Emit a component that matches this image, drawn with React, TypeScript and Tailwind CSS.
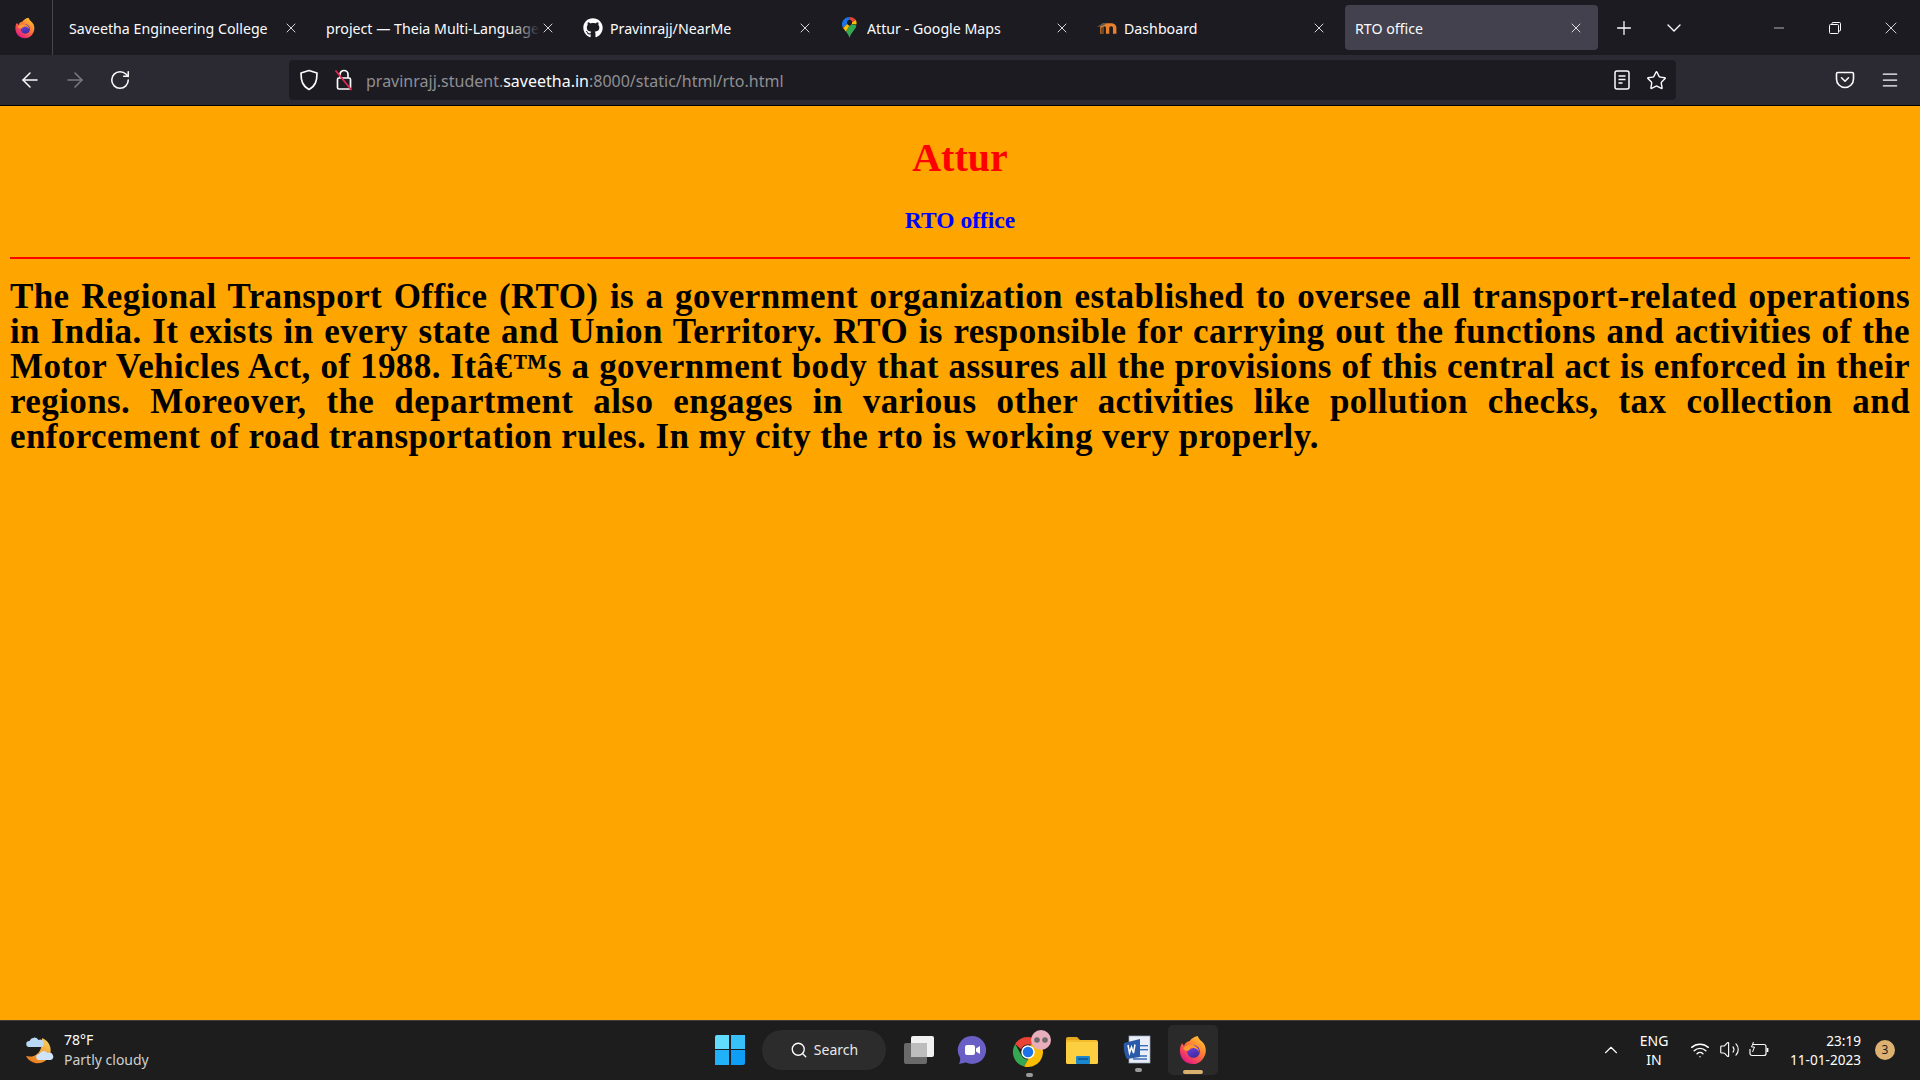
import React from "react";
import { ArrowLeft, ArrowRight, RotateCw, X, Plus, ChevronDown, ChevronUp, Minus, Star, Menu, Search, Wifi, Volume2 } from "lucide-react";
import { FaGithub } from "react-icons/fa";

const ui = "font-['Noto_Sans','Open_Sans',sans-serif]";

function FirefoxLogo({ size = 22 }: { size?: number }) {
  return (
    <svg width={size} height={size} viewBox="0 0 32 32">
      <defs>
        <linearGradient id="ffa" x1="0.8" y1="0.1" x2="0.2" y2="0.95">
          <stop offset="0" stopColor="#ffbd2e" />
          <stop offset="0.45" stopColor="#ff7139" />
          <stop offset="1" stopColor="#e31587" />
        </linearGradient>
        <linearGradient id="ffb" x1="0.3" y1="0" x2="0.7" y2="1">
          <stop offset="0" stopColor="#7542e5" />
          <stop offset="1" stopColor="#3a2a9c" />
        </linearGradient>
      </defs>
      <path d="M21 1c1 4 6 6 7.500 10 2 5 1.500 10-2 14.500C23.500 29.500 19.500 31 16 31 8 31 2 25 2 16.500 2 13 3 10.500 4.500 8.500c.5 1.500 1 2.300 2 3C7.500 8.500 10 7 12.500 6.500 14 3.500 17 2 21 1z" fill="url(#ffa)" />
      <circle cx="16.500" cy="17.500" r="6.800" fill="url(#ffb)" />
      <path d="M5.500 14c3-3 8-4.500 11-3 3 1 6 4 6 7.500-1-3-4-5-7.500-4.500-1.500.2-2.500 1-3.500 2.500-2 1-4.500 0-6-2.500z" fill="#ff9a2e" />
    </svg>
  );
}

function MapsPin() {
  return (
    <svg width="15" height="21" viewBox="0 0 15 21" className="ml-[2px]">
      <path d="M7.500 0C3.400 0 0 3.300 0 7.400c0 1.500.4 2.600 1.100 3.700l4.300-4.300A2.600 2.600 0 0 1 7.500 2.800V0z" fill="#1a73e8" />
      <path d="M7.500 0v2.800c1.400 0 2.600 1.200 2.600 2.500l3.700-2.400C12.600 1.200 10.200 0 7.500 0z" fill="#ea4335" />
      <path d="M10.100 5.300c0 .6-.2 1.100-.6 1.600l4.800.5c.3-.9.700-2.500-.5-4.500l-3.700 2.400z" fill="#fbbc04" />
      <path d="M1.100 11.100 5.400 6.800c.3 1 1.200 1.800 2.100 1.900L4 14.700c-1-1.300-2.200-2.300-2.900-3.600z" fill="#fbbc04" />
      <path d="M9.500 6.900c-.5.600-1.200 1.800-2 1.800l-3.500 6c1.400 1.700 2.800 3.400 3.500 6.300 1-4 3.300-5.800 5.500-9.200.6-.9 1-1.600 1.300-3.400l-4.800-1.500z" fill="#34a853" />
      <circle cx="7.500" cy="5.800" r="2.300" fill="#1c1b22" />
    </svg>
  );
}

function MoodleLogo() {
  return (
    <svg width="21" height="15" viewBox="0 0 20 14">
      <path d="M3 13V6.500C3 4 5 3 7 3h6c3.500 0 5.500 1.800 5.500 4.500V13h-3.300V7.500c0-1-.6-1.700-1.700-1.700s-1.800.7-1.800 1.700V13H8.500V7.500c0-1-.6-1.700-1.500-1.700-.6 0-.9.3-.9.800V13z" fill="#e8812a" />
      <path d="M0 6 7 2.500 9 3.500 2.500 6.500z" fill="#555" />
      <path d="M3.500 13V7.500L6 6.300V13z" fill="#6b4a2a" />
    </svg>
  );
}

function Tab({ title, icon, fade, active }: { title: string; icon?: React.ReactNode; fade?: boolean; active?: boolean }) {
  return (
    <div className="w-[257px] h-[55px] shrink-0 py-[5px] px-[2px]">
      <div className={`h-[45px] flex items-center pl-[8px] pr-[14px] rounded-[4px] ${active ? "bg-[#42414d]" : ""}`}>
        <div className={`flex items-center flex-1 min-w-0 ${active ? "pl-[2px]" : "pl-[1px]"}`}>
          {icon && <div className="w-[27px] shrink-0 flex items-center">{icon}</div>}
          <div className="relative flex-1 min-w-0 pt-[2px] h-[22px] overflow-hidden whitespace-nowrap text-[14.2px] leading-[20px] text-[#fbfbfe]">
            {title}
            {fade && <div className="absolute right-0 top-0 bottom-0 w-[30px] bg-gradient-to-r from-transparent to-[#1c1b22]" />}
          </div>
        </div>
        <X size={16} strokeWidth={1.25} className="shrink-0 text-[#fbfbfe]" />
      </div>
    </div>
  );
}

function ShieldIcon() {
  return (
    <svg width="20" height="22" viewBox="0 0 20 22" fill="none" stroke="#fbfbfe" strokeWidth="1.700" strokeLinejoin="round">
      <path d="M10 1.500 2 4c0 8 1.500 13 8 16.500C16.500 17 18 12 18 4z" />
    </svg>
  );
}

function InsecureLock() {
  return (
    <svg width="20" height="24" viewBox="0 0 20 24" fill="none">
      <path d="M6 10V6.500a4 4 0 0 1 8 0V10" stroke="#fbfbfe" strokeWidth="1.700" />
      <rect x="3.500" y="10" width="13" height="11" rx="1.500" stroke="#fbfbfe" strokeWidth="1.700" />
      <path d="M1.500 2.500 17.500 22" stroke="#e22850" strokeWidth="1.800" />
    </svg>
  );
}

function ReaderIcon() {
  return (
    <svg width="16" height="22" viewBox="0 0 16 22" fill="none" stroke="#fbfbfe" strokeWidth="1.500">
      <rect x="1" y="2" width="14" height="18" rx="2" />
      <path d="M4.500 7h7M4.500 10.500h7M4.500 14h4" />
    </svg>
  );
}

function PocketIcon() {
  return (
    <svg width="20" height="20" viewBox="0 0 20 20" fill="none" stroke="#fbfbfe" strokeWidth="1.600">
      <path d="M2.800 2.500h14.400c.7 0 1.300.6 1.300 1.300V9a8.500 8.500 0 0 1-17 0V3.800c0-.7.600-1.300 1.300-1.300z" />
      <path d="m6.500 7.800 3.500 3.400 3.500-3.400" strokeLinecap="round" strokeLinejoin="round" />
    </svg>
  );
}

function RestoreIcon() {
  return (
    <svg width="12" height="12" viewBox="0 0 12 12" fill="none" stroke="#fbfbfe" strokeWidth="1">
      <rect x="0.500" y="2.500" width="9" height="9" rx="1" fill="#1c1b22" />
      <path d="M3 2.500V1.500a1 1 0 0 1 1-1h6.500a1 1 0 0 1 1 1V8a1 1 0 0 1-1 1h-1" />
    </svg>
  );
}

function TabBar() {
  return (
    <div className="h-[55px] bg-[#1c1b22] flex shrink-0">
      <div className="w-[53px] flex items-center justify-center pr-[3px] border-r border-[#46454d]">
        <FirefoxLogo size={22} />
      </div>
      <div className="w-[5px]" />
      <Tab title="Saveetha Engineering College" />
      <Tab title="project — Theia Multi-Language Example" fade />
      <Tab title="Pravinrajj/NearMe" icon={<FaGithub size={20} color="#fbfbfe" />} />
      <Tab title="Attur - Google Maps" icon={<MapsPin />} />
      <Tab title="Dashboard" icon={<MoodleLogo />} />
      <Tab title="RTO office" active />
      <div className="w-[13px]" />
      <Plus size={22} strokeWidth={1.4} className="text-[#fbfbfe] self-center mt-[1px]" />
      <ChevronDown size={24} strokeWidth={1.4} className="text-[#fbfbfe] self-center ml-[27px]" />
      <div className="ml-auto flex items-center">
        <div className="w-[46px] flex justify-center"><Minus size={16} strokeWidth={1} className="text-[#fbfbfe]" /></div>
        <div className="w-[66px] flex justify-center"><RestoreIcon /></div>
        <div className="w-[46px] flex justify-center mr-[6px]"><X size={20} strokeWidth={1} className="text-[#fbfbfe]" /></div>
      </div>
    </div>
  );
}

function Toolbar() {
  return (
    <div className="h-[50px] bg-[#2b2a33] flex items-center shrink-0">
      <div className="w-[289px] flex items-center pl-[18px] gap-[21px]">
        <ArrowLeft size={24} strokeWidth={1.5} className="text-[#fbfbfe]" />
        <ArrowRight size={24} strokeWidth={1.5} className="text-[#7b7a80]" />
        <RotateCw size={22} strokeWidth={1.7} className="text-[#fbfbfe] ml-[1px]" />
      </div>
      <div className="w-[1387px] h-[40px] bg-[#1c1b22] rounded-[4px] flex items-center pl-[10px] pr-[9px]">
        <ShieldIcon />
        <div className="ml-[15px]"><InsecureLock /></div>
        <div className={`ml-[12px] pt-[2px] text-[16px] leading-[24px] text-[#8f8f93] ${ui}`}>
          pravinrajj.student.<span className="text-[#fbfbfe]">saveetha.in</span>:8000/static/html/rto.html
        </div>
        <div className="ml-auto flex items-center gap-[16px]">
          <ReaderIcon />
          <Star size={21} strokeWidth={1.6} className="text-[#fbfbfe]" />
        </div>
      </div>
      <div className="ml-auto flex items-center gap-[25px] pr-[20px]">
        <PocketIcon />
        <Menu size={20} strokeWidth={1.5} className="text-[#fbfbfe]" />
      </div>
    </div>
  );
}

function Page() {
  return (
    <main className="flex-1 bg-[#ffa500] border-t border-black px-[10px] pt-[29px] font-['Liberation_Serif',serif] min-h-0">
      <h1 className="text-[40px] leading-[46px] font-bold text-[#ff0000] text-center">Attur</h1>
      <h2 className="mt-[26px] text-[23.500px] leading-[27px] font-bold text-[#0000ff] text-center">RTO office</h2>
      <hr className="mt-[23px] border-0 h-[2px] bg-[#ff0000]" />
      <p className="mt-[20px] text-[35px] tracking-[0.4px] leading-[35px] font-bold text-black text-justify">
        The Regional Transport Office (RTO) is a government organization established to oversee all transport-related operations in India. It exists in every state and Union Territory. RTO is responsible for carrying out the functions and activities of the Motor Vehicles Act, of 1988. Itâ€™s a government body that assures all the provisions of this central act is enforced in their regions. Moreover, the department also engages in various other activities like pollution checks, tax collection and enforcement of road transportation rules. In my city the rto is working very properly.
      </p>
    </main>
  );
}

function Weather() {
  return (
    <svg width="32" height="30" viewBox="0 0 32 30">
      <defs>
        <linearGradient id="moon" x1="0.8" y1="0" x2="0.2" y2="1">
          <stop offset="0" stopColor="#f8cf5a" />
          <stop offset="1" stopColor="#e9791c" />
        </linearGradient>
      </defs>
      <path d="M18 3a13 13 0 1 1-16 18c8 2 17-2 16-18z" fill="url(#moon)" />
      <path d="M5 12a3 3 0 0 1 .5-6 5 5 0 0 1 9-1 3.500 3.500 0 0 1 3 7z" fill="#b9d8f5" />
      <path d="M15 25a3 3 0 0 1 .5-6 4.500 4.500 0 0 1 8-1 3.500 3.500 0 0 1 3.500 7z" fill="#cfe4f8" />
    </svg>
  );
}

function Start() {
  return (
    <div className="grid grid-cols-2 gap-[1.500px] w-[30px] h-[30px]">
      <div className="bg-[#62dcfc] rounded-tl-[2px]" />
      <div className="bg-[#38c0fb]" />
      <div className="bg-[#22b0f8]" />
      <div className="bg-[#0f9ef5] rounded-br-[2px]" />
    </div>
  );
}

function TaskView() {
  return (
    <div className="relative w-[30px] h-[28px]">
      <div className="absolute left-0 bottom-0 w-[23px] h-[21px] bg-[#6a6a6a] rounded-[2px]" />
      <div className="absolute right-0 top-0 w-[23px] h-[21px] bg-[#f1f1f1] rounded-[2px]" />
      <div className="absolute left-[7px] top-[7px] w-[16px] h-[14px] bg-[#bdbdbd]" />
    </div>
  );
}

function Teams() {
  return (
    <svg width="30" height="30" viewBox="0 0 30 30">
      <path d="M15 1a14 14 0 1 1-6 26.600L2 29c1-2 1.500-4 1-6.500A14 14 0 0 1 15 1z" fill="#6a5fc4" />
      <rect x="8" y="10" width="10" height="10" rx="2" fill="#fff" />
      <path d="m19 13.500 4-2.500v8l-4-2.500z" fill="#fff" />
    </svg>
  );
}

function Chrome() {
  return (
    <div className="relative w-[36px] h-[36px]">
      <svg width="32" height="32" viewBox="0 0 32 32" className="absolute left-0 bottom-0">
        <path d="M16 1a15 15 0 0 1 13 7.500H16a7.500 7.500 0 0 0-7 4.700L3.200 8A15 15 0 0 1 16 1z" fill="#ea4335" />
        <path d="M3.200 8 9.500 19.500a7.500 7.500 0 0 0 6.500 4L12 30.500A15 15 0 0 1 3.200 8z" fill="#34a853" />
        <path d="M29 8.500A15 15 0 0 1 12 30.500l6.300-11a7.500 7.500 0 0 0-.3-11z" fill="#fbbc04" />
        <circle cx="16" cy="16" r="6" fill="#1a73e8" stroke="#fff" strokeWidth="1.500" />
      </svg>
      <svg width="20" height="20" viewBox="0 0 20 20" className="absolute right-[-3px] top-[-2px]">
        <circle cx="10" cy="10" r="10" fill="#e8aebc" />
        <circle cx="6" cy="10" r="2.800" fill="#6e6a6c" />
        <circle cx="14" cy="10" r="2.800" fill="#6e6a6c" />
      </svg>
    </div>
  );
}

function Folder() {
  return (
    <svg width="32" height="28" viewBox="0 0 32 28">
      <path d="M0 3a2 2 0 0 1 2-2h9l3 3h-14z" fill="#e5a91f" />
      <path d="M0 4h30a2 2 0 0 1 2 2v4H0z" fill="#f3bd2c" />
      <rect y="6" width="32" height="22" rx="1.500" fill="#fccf41" />
      <rect x="10" y="20" width="14" height="8" rx="1" fill="#1a87cf" />
      <rect x="12" y="22" width="10" height="2" fill="#0d5f9e" />
    </svg>
  );
}

function Word() {
  return (
    <svg width="30" height="30" viewBox="0 0 30 30">
      <rect x="6" y="1" width="21" height="27" fill="#e9eef7" stroke="#9aa9c4" strokeWidth="0.700" />
      <path d="M10 21h14M10 24h14" stroke="#3b6cb8" strokeWidth="1.400" />
      <rect x="17" y="10" width="8" height="1.400" fill="#3b6cb8" />
      <rect x="17" y="14" width="8" height="1.400" fill="#3b6cb8" />
      <path d="M1 8 17 4v18L4 24c-2-3-4-10-3-16z" fill="#2a5aa8" />
      <path d="m5 10 1.500 8 2-6 2 6L12 9.500" fill="none" stroke="#fff" strokeWidth="1.500" />
    </svg>
  );
}

function Battery() {
  return (
    <svg width="20" height="18" viewBox="0 0 20 18" fill="none" stroke="#fbfbfe" strokeWidth="1.200">
      <path d="M4 3.500h11a2 2 0 0 1 2 2v7a2 2 0 0 1-2 2H3a2 2 0 0 1-2-2V8" />
      <path d="M18.500 7v4" strokeWidth="1.800" />
      <path d="M4.500 1 2.500 6h3L3.500 11" strokeWidth="1" />
    </svg>
  );
}

function TaskBar() {
  return (
    <div className={`h-[60px] shrink-0 bg-[#1d1d1d] border-t border-[#3d3d3d] flex items-center pb-[2px] ${ui}`}>
      <div className="w-[715px] shrink-0 flex items-center pl-[24px] gap-[8px]">
        <Weather />
        <div className="text-[14px] leading-[20px]">
          <div className="text-white">78°F</div>
          <div className="text-[#cfcfcf]">Partly cloudy</div>
        </div>
      </div>
      <Start />
      <div className="ml-[17px] w-[124px] h-[40px] rounded-full bg-[#2c2c2c] flex items-center justify-center gap-[6px] text-[14px] text-[#e8e8e8]">
        <Search size={18} strokeWidth={1.8} className="text-white" />
        Search
      </div>
      <div className="ml-[18px]"><TaskView /></div>
      <div className="ml-[23px]"><Teams /></div>
      <div className="relative ml-[25px]">
        <Chrome />
        <div className="absolute left-[14px] bottom-[-9px] w-[7px] h-[4px] rounded-full bg-[#9a9a9a]" />
      </div>
      <div className="ml-[18px]"><Folder /></div>
      <div className="relative ml-[25px]">
        <Word />
        <div className="absolute left-[12px] bottom-[-7px] w-[7px] h-[4px] rounded-full bg-[#9a9a9a]" />
      </div>
      <div className="relative ml-[15px] w-[50px] h-[50px] rounded-[5px] bg-[#2a2a2a] flex items-center justify-center">
        <FirefoxLogo size={30} />
        <div className="absolute left-[15px] bottom-[1px] w-[20px] h-[4px] rounded-full bg-[#d9b070]" />
      </div>
      <div className="ml-auto flex items-center text-white">
        <ChevronUp size={22} strokeWidth={1.2} />
        <div className="ml-[14px] w-[36px] text-center text-[14px] leading-[19px]">ENG<br />IN</div>
        <div className="ml-[18px]"><Wifi size={20} strokeWidth={1.7} /></div>
        <div className="ml-[9px]"><Volume2 size={21} strokeWidth={1.3} /></div>
        <div className="ml-[9px]"><Battery /></div>
        <div className="ml-[21px] text-right text-[13.600px] leading-[19px]">23:19<br />11-01-2023</div>
        <div className="ml-[14px] mr-[25px] w-[20px] h-[20px] rounded-full bg-[#dcb171] text-[#1d1d1d] text-[12px] leading-[20px] text-center">3</div>
      </div>
    </div>
  );
}

export default function App() {
  return (
    <div className={`w-[1920px] h-[1080px] flex flex-col overflow-hidden ${ui}`}>
      <TabBar />
      <Toolbar />
      <Page />
      <TaskBar />
    </div>
  );
}
